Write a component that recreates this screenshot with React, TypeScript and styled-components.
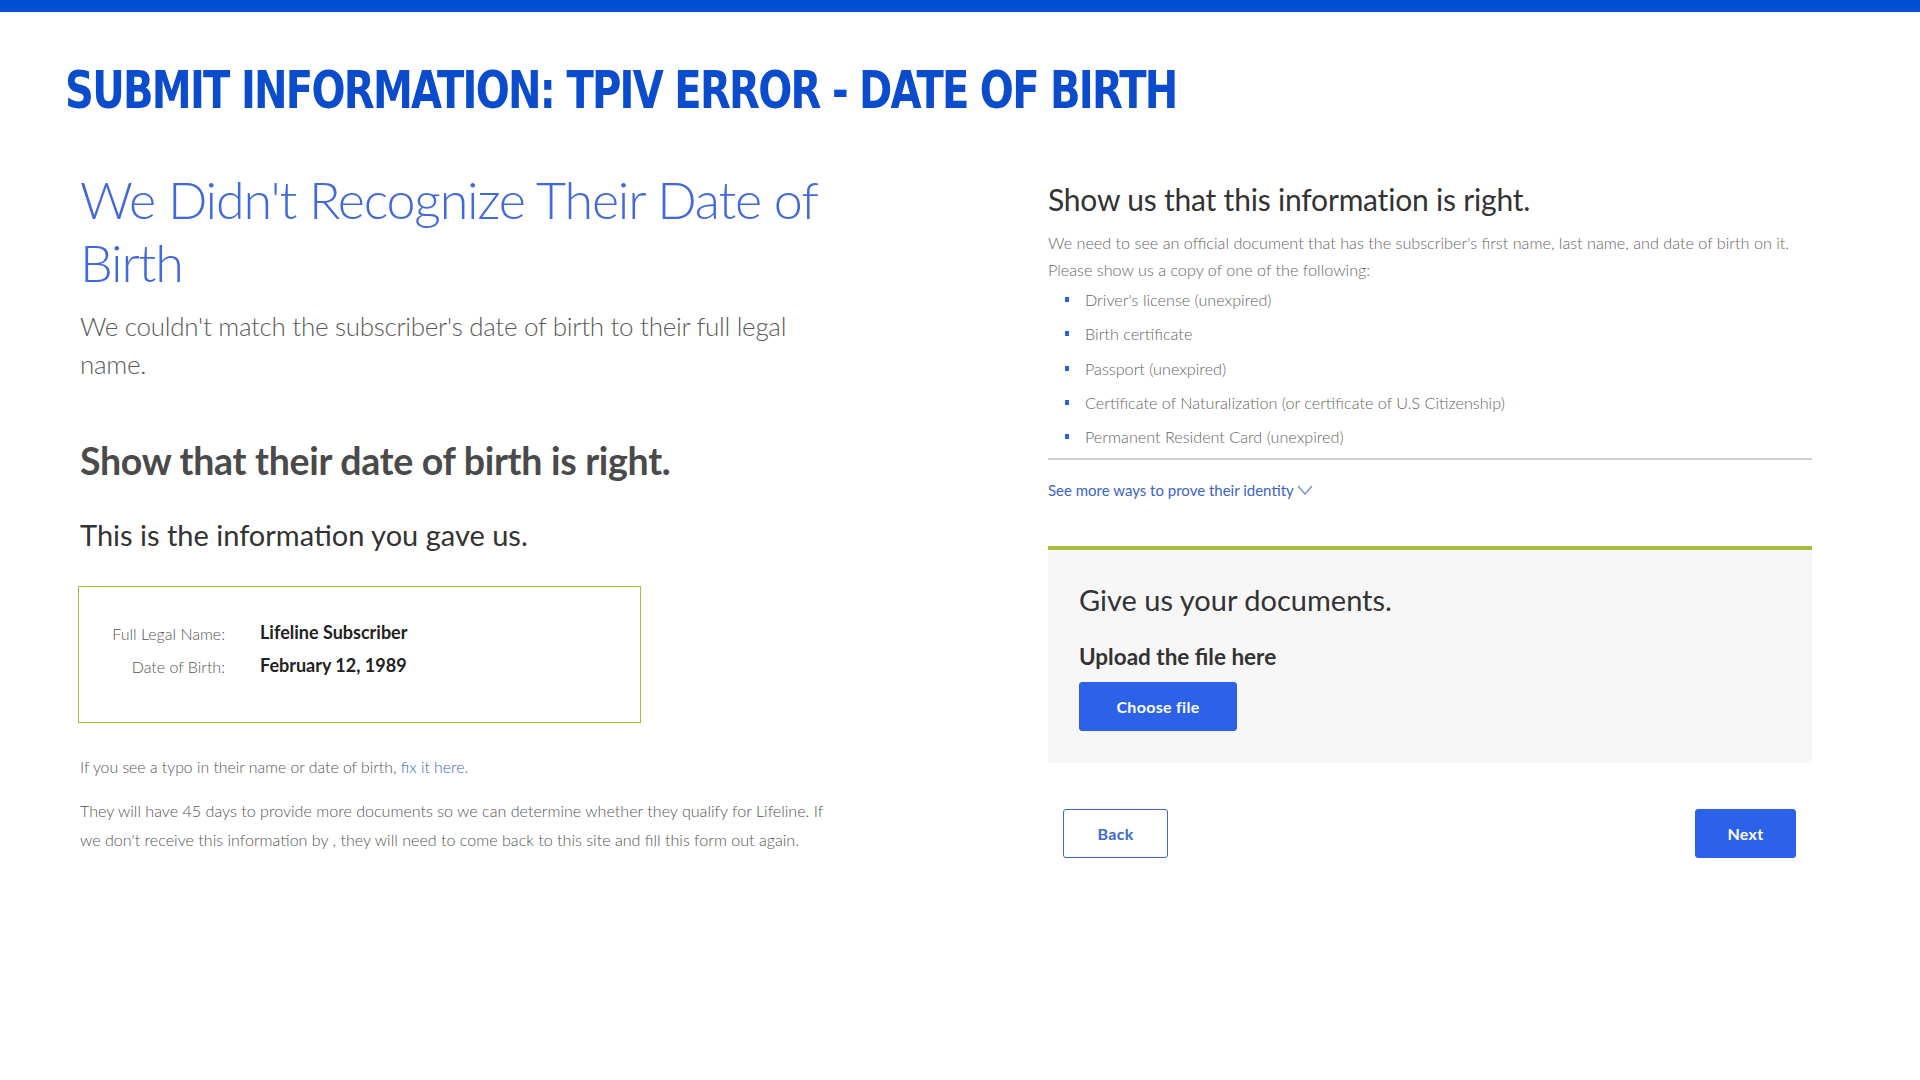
import styled, { createGlobalStyle } from 'styled-components'

const GlobalStyle = createGlobalStyle`
  * {
    box-sizing: border-box;
  }
  body {
    margin: 0;
    background: #ffffff;
    font-family: Lato, 'Open Sans', sans-serif;
    color: #333333;
  }
`

const documentTypes = [
  "Driver's license (unexpired)",
  'Birth certificate',
  'Passport (unexpired)',
  'Certificate of Naturalization (or certificate of U.S Citizenship)',
  'Permanent Resident Card (unexpired)'
]

const App = () => (
  <>
    <GlobalStyle />
    <TopBar />
    <PageTitle>SUBMIT INFORMATION: TPIV ERROR - DATE OF BIRTH</PageTitle>
    <Main>
      <LeftColumn>
        <Heading>We Didn't Recognize Their Date of Birth</Heading>
        <Lead>We couldn't match the subscriber's date of birth to their full legal name.</Lead>
        <SectionTitle>Show that their date of birth is right.</SectionTitle>
        <InfoIntro>This is the information you gave us.</InfoIntro>
        <InfoBox>
          <InfoLabel>Full Legal Name:</InfoLabel>
          <InfoValue>Lifeline Subscriber</InfoValue>
          <InfoLabel>Date of Birth:</InfoLabel>
          <InfoValue>February 12, 1989</InfoValue>
        </InfoBox>
        <TypoNote>
          If you see a typo in their name or date of birth, <Link href="#">fix it here.</Link>
        </TypoNote>
        <Note>
          They will have 45 days to provide more documents so we can determine whether they qualify for Lifeline. If
          we don't receive this information by , they will need to come back to this site and fill this form out again.
        </Note>
      </LeftColumn>

      <RightColumn>
        <ProofTitle>Show us that this information is right.</ProofTitle>
        <ProofText>
          We need to see an official document that has the subscriber's first name, last name, and date of birth on it.
          <br />
          Please show us a copy of one of the following:
        </ProofText>
        <DocList>
          {documentTypes.map((doc) => (
            <DocItem key={doc}>{doc}</DocItem>
          ))}
        </DocList>
        <MoreLink href="#">
          See more ways to prove their identity
          <svg width="16" height="10" viewBox="0 0 16 10" fill="none">
            <polyline points="1,1 8,9 15,1" stroke="#6b8be0" strokeWidth="1.2" />
          </svg>
        </MoreLink>
        <UploadPanel>
          <UploadTitle>Give us your documents.</UploadTitle>
          <UploadLabel>Upload the file here</UploadLabel>
          <ActionButton $width={158}>Choose file</ActionButton>
        </UploadPanel>
        <NavRow>
          <ActionButton $outline $width={105}>
            Back
          </ActionButton>
          <ActionButton $width={101}>Next</ActionButton>
        </NavRow>
      </RightColumn>
    </Main>
  </>
)

export default App

const TopBar = styled.div`
  height: 12px;
  background: #0050d2;
`

const PageTitle = styled.h1`
  margin: 48px 0 0 65px;
  font-family: 'Liberation Sans Narrow', 'DejaVu Sans Condensed', Roboto, sans-serif;
  font-weight: 700;
  font-size: 52px;
  line-height: 60px;
  color: #0a4ccc;
  letter-spacing: -2px;
  white-space: nowrap;
  transform: scaleX(0.856);
  transform-origin: left center;
`

const Main = styled.div`
  display: grid;
  grid-template-columns: 825px 764px;
  column-gap: 143px;
  padding-left: 80px;
  margin-top: 40px;
`

const LeftColumn = styled.div`
  display: flex;
  flex-direction: column;
  align-items: flex-start;
`

const Heading = styled.h2`
  margin: 8px 0 0;
  max-width: 760px;
  font-size: 52px;
  line-height: 63px;
  font-weight: 300;
  letter-spacing: -1.2px;
  color: #4169d9;
`

const Lead = styled.p`
  margin: 13px 0 0;
  max-width: 740px;
  font-size: 26px;
  line-height: 38px;
  font-weight: 300;
  letter-spacing: -0.3px;
  color: #5a5a5a;
`

const SectionTitle = styled.h3`
  margin: 56px 0 0;
  font-size: 37.5px;
  line-height: 44px;
  font-weight: 700;
  letter-spacing: -0.3px;
  color: #4a4a4a;
`

const InfoIntro = styled.p`
  margin: 34px 0 0;
  font-size: 29px;
  line-height: 36px;
  font-weight: 400;
  color: #333333;
`

const InfoBox = styled.div`
  margin: 33px 0 0 -2px;
  width: 563px;
  height: 137px;
  border: 1px solid #a6bb48;
  padding: 28px 0 0;
  display: grid;
  grid-template-columns: 146px auto;
  grid-auto-rows: 33px;
  column-gap: 35px;
  align-items: center;
  align-content: start;
`

const InfoLabel = styled.span`
  justify-self: end;
  padding-top: 4px;
  font-size: 16px;
  font-weight: 300;
  color: #555555;
`

const InfoValue = styled.span`
  font-size: 18px;
  font-weight: 700;
  color: #222222;
`

const TypoNote = styled.p`
  margin: 33px 0 0;
  font-size: 15.8px;
  line-height: 22px;
  font-weight: 300;
  color: #555555;
`

const Link = styled.a`
  color: #3b63c9;
  text-decoration: none;
`

const Note = styled.p`
  margin: 18px 0 0;
  max-width: 750px;
  font-size: 16.1px;
  line-height: 29px;
  font-weight: 300;
  color: #555555;
`

const RightColumn = styled.div`
  display: flex;
  flex-direction: column;
`

const ProofTitle = styled.h2`
  margin: 19px 0 0;
  font-size: 30px;
  line-height: 40px;
  font-weight: 400;
  letter-spacing: -0.2px;
  color: #333333;
`

const ProofText = styled.p`
  margin: 10px 0 0;
  font-size: 16.2px;
  line-height: 27px;
  font-weight: 300;
  color: #666666;
`

const DocList = styled.ul`
  margin: 0;
  padding: 0 0 4px;
  list-style: none;
  border-bottom: 2px solid #d0d0d0;
`

const DocItem = styled.li`
  position: relative;
  padding-left: 37px;
  font-size: 16.2px;
  line-height: 34.3px;
  font-weight: 300;
  color: #666666;

  &::before {
    content: '';
    position: absolute;
    left: 17px;
    top: 14px;
    width: 4px;
    height: 5px;
    background: #2d5fd6;
  }
`

const MoreLink = styled.a`
  margin-top: 19px;
  display: inline-flex;
  align-items: center;
  gap: 3px;
  align-self: flex-start;
  font-size: 15px;
  line-height: 22px;
  color: #3b63c9;
  text-decoration: none;
`

const UploadPanel = styled.div`
  margin-top: 45px;
  padding: 31px 31px 32px;
  background: #f7f7f7;
  border-top: 4px solid #a8bd3b;
  display: flex;
  flex-direction: column;
  align-items: flex-start;
`

const UploadTitle = styled.h3`
  margin: 0;
  font-size: 29px;
  line-height: 38px;
  font-weight: 400;
  color: #333333;
`

const UploadLabel = styled.div`
  margin: 24px 0 11px;
  font-size: 22.5px;
  line-height: 28px;
  font-weight: 700;
  color: #333333;
`

const ActionButton = styled.button<{ $outline?: boolean; $width: number }>`
  width: ${({ $width }) => $width}px;
  height: 49px;
  border-radius: 3px;
  border: 1px solid ${({ $outline }) => ($outline ? '#3e66cf' : '#2b62e8')};
  background: ${({ $outline }) => ($outline ? '#ffffff' : '#2b62e8')};
  color: ${({ $outline }) => ($outline ? '#3e66cf' : '#ffffff')};
  font-family: Lato, 'Open Sans', sans-serif;
  font-size: 16px;
  font-weight: 700;
  letter-spacing: 0.3px;
  cursor: pointer;
`

const NavRow = styled.div`
  margin-top: 46px;
  padding: 0 16px 0 15px;
  display: flex;
  justify-content: space-between;
`
